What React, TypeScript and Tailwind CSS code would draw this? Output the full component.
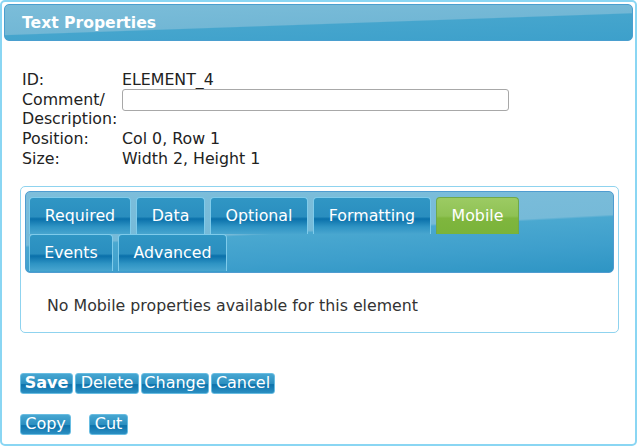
import React from 'react';

const font = { fontFamily: '"DejaVu Sans", Verdana, sans-serif' };

const tabBg =
  'bg-[linear-gradient(180deg,#3096c4_0%,#2a8ebf_52%,#0a70aa_58%,#2f94c4_80%,#48a5cf_100%)]';
const btnBg =
  'bg-[linear-gradient(180deg,#46a6d1_0%,#2c8fc0_50%,#0d72ab_56%,#2b8fc2_100%)]';

const Tab: React.FC<{ label: string; active?: boolean; w: string }> = ({ label, active, w }) => (
  <div
    className={`${w} h-[37px] flex items-center justify-center rounded-t-[4px] border border-b-0 text-[15.8px] ${
      active
        ? 'border-[#6fa84a] bg-[linear-gradient(180deg,#9ccb63_0%,#8fc254_50%,#7fb63e_56%,#7ab33a_100%)] text-white'
        : `border-[#7fcbea] ${tabBg} text-white`
    }`}
  >
    {label}
  </div>
);

const Btn: React.FC<{ label: string; bold?: boolean; w: string }> = ({ label, bold, w }) => (
  <button
    className={`${w} h-[21px] flex items-center justify-center rounded-[3px] border border-[#69bde2] ${btnBg} text-white text-[16px] leading-none ${
      bold ? 'font-bold' : ''
    }`}
  >
    {label}
  </button>
);

export default function App() {
  return (
    <div className="w-[638px] h-[447px] bg-white p-0" style={font}>
      <div className="w-[637px] h-[446px] border-2 border-[#8ad6f3] rounded-[5px] px-[2px] pt-[2px] flex flex-col">
        <div className="h-[37px] rounded-[5px] border border-[#4a9fcf] bg-[linear-gradient(178deg,#7bbdd9_0%,#72b7d5_52%,#45a5cd_54%,#3da0cb_100%)] flex items-center pl-[17px] pt-[2px]">
          <span className="text-white font-bold text-[15.6px]">Text Properties</span>
        </div>

        <div className="pl-[18px] pt-[29px] text-[15.8px] text-[#222] leading-[19.7px]">
          <div className="flex">
            <span className="w-[100px]">ID:</span>
            <span>ELEMENT_4</span>
          </div>
          <div className="flex">
            <span className="w-[100px]">
              Comment/
              <br />
              Description:
            </span>
            <input
              className="w-[387px] h-[22px] mt-[-1px] rounded-[3px] border border-[#a8a8a8] outline-none"
              type="text"
            />
          </div>
          <div className="flex">
            <span className="w-[100px]">Position:</span>
            <span>Col 0, Row 1</span>
          </div>
          <div className="flex">
            <span className="w-[100px]">Size:</span>
            <span>Width 2, Height 1</span>
          </div>
        </div>

        <div className="mt-[17px] ml-[16px] w-[599px] h-[147px] border border-[#8fd3ef] rounded-[5px] p-[4px]">
          <div className="h-[82px] rounded-[5px] border border-[#4f9cd0] bg-[linear-gradient(177deg,#7dbedb_0%,#76bad8_48%,#4aa8d0_50%,#3e9fcc_75%,#2e95c4_100%)] pl-[3px] pt-[5px] flex flex-col">
            <div className="flex gap-[5px]">
              <Tab label="Required" w="w-[102px]" />
              <Tab label="Data" w="w-[69px]" />
              <Tab label="Optional" w="w-[98px]" />
              <Tab label="Formatting" w="w-[118px]" />
              <Tab label="Mobile" w="w-[83px]" active />
            </div>
            <div className="flex gap-[5px]">
              <Tab label="Events" w="w-[84px]" />
              <Tab label="Advanced" w="w-[109px]" />
            </div>
          </div>
          <div className="pl-[22px] pt-[21px] text-[15.8px] text-[#333]">
            No Mobile properties available for this element
          </div>
        </div>

        <div className="mt-[40px] ml-[16px] flex gap-[2px]">
          <Btn label="Save" bold w="w-[53px]" />
          <Btn label="Delete" w="w-[64px]" />
          <Btn label="Change" w="w-[68px]" />
          <Btn label="Cancel" w="w-[64px]" />
        </div>
        <div className="mt-[20px] ml-[16px] flex gap-[18px]">
          <Btn label="Copy" w="w-[51px]" />
          <Btn label="Cut" w="w-[39px]" />
        </div>
      </div>
    </div>
  );
}
